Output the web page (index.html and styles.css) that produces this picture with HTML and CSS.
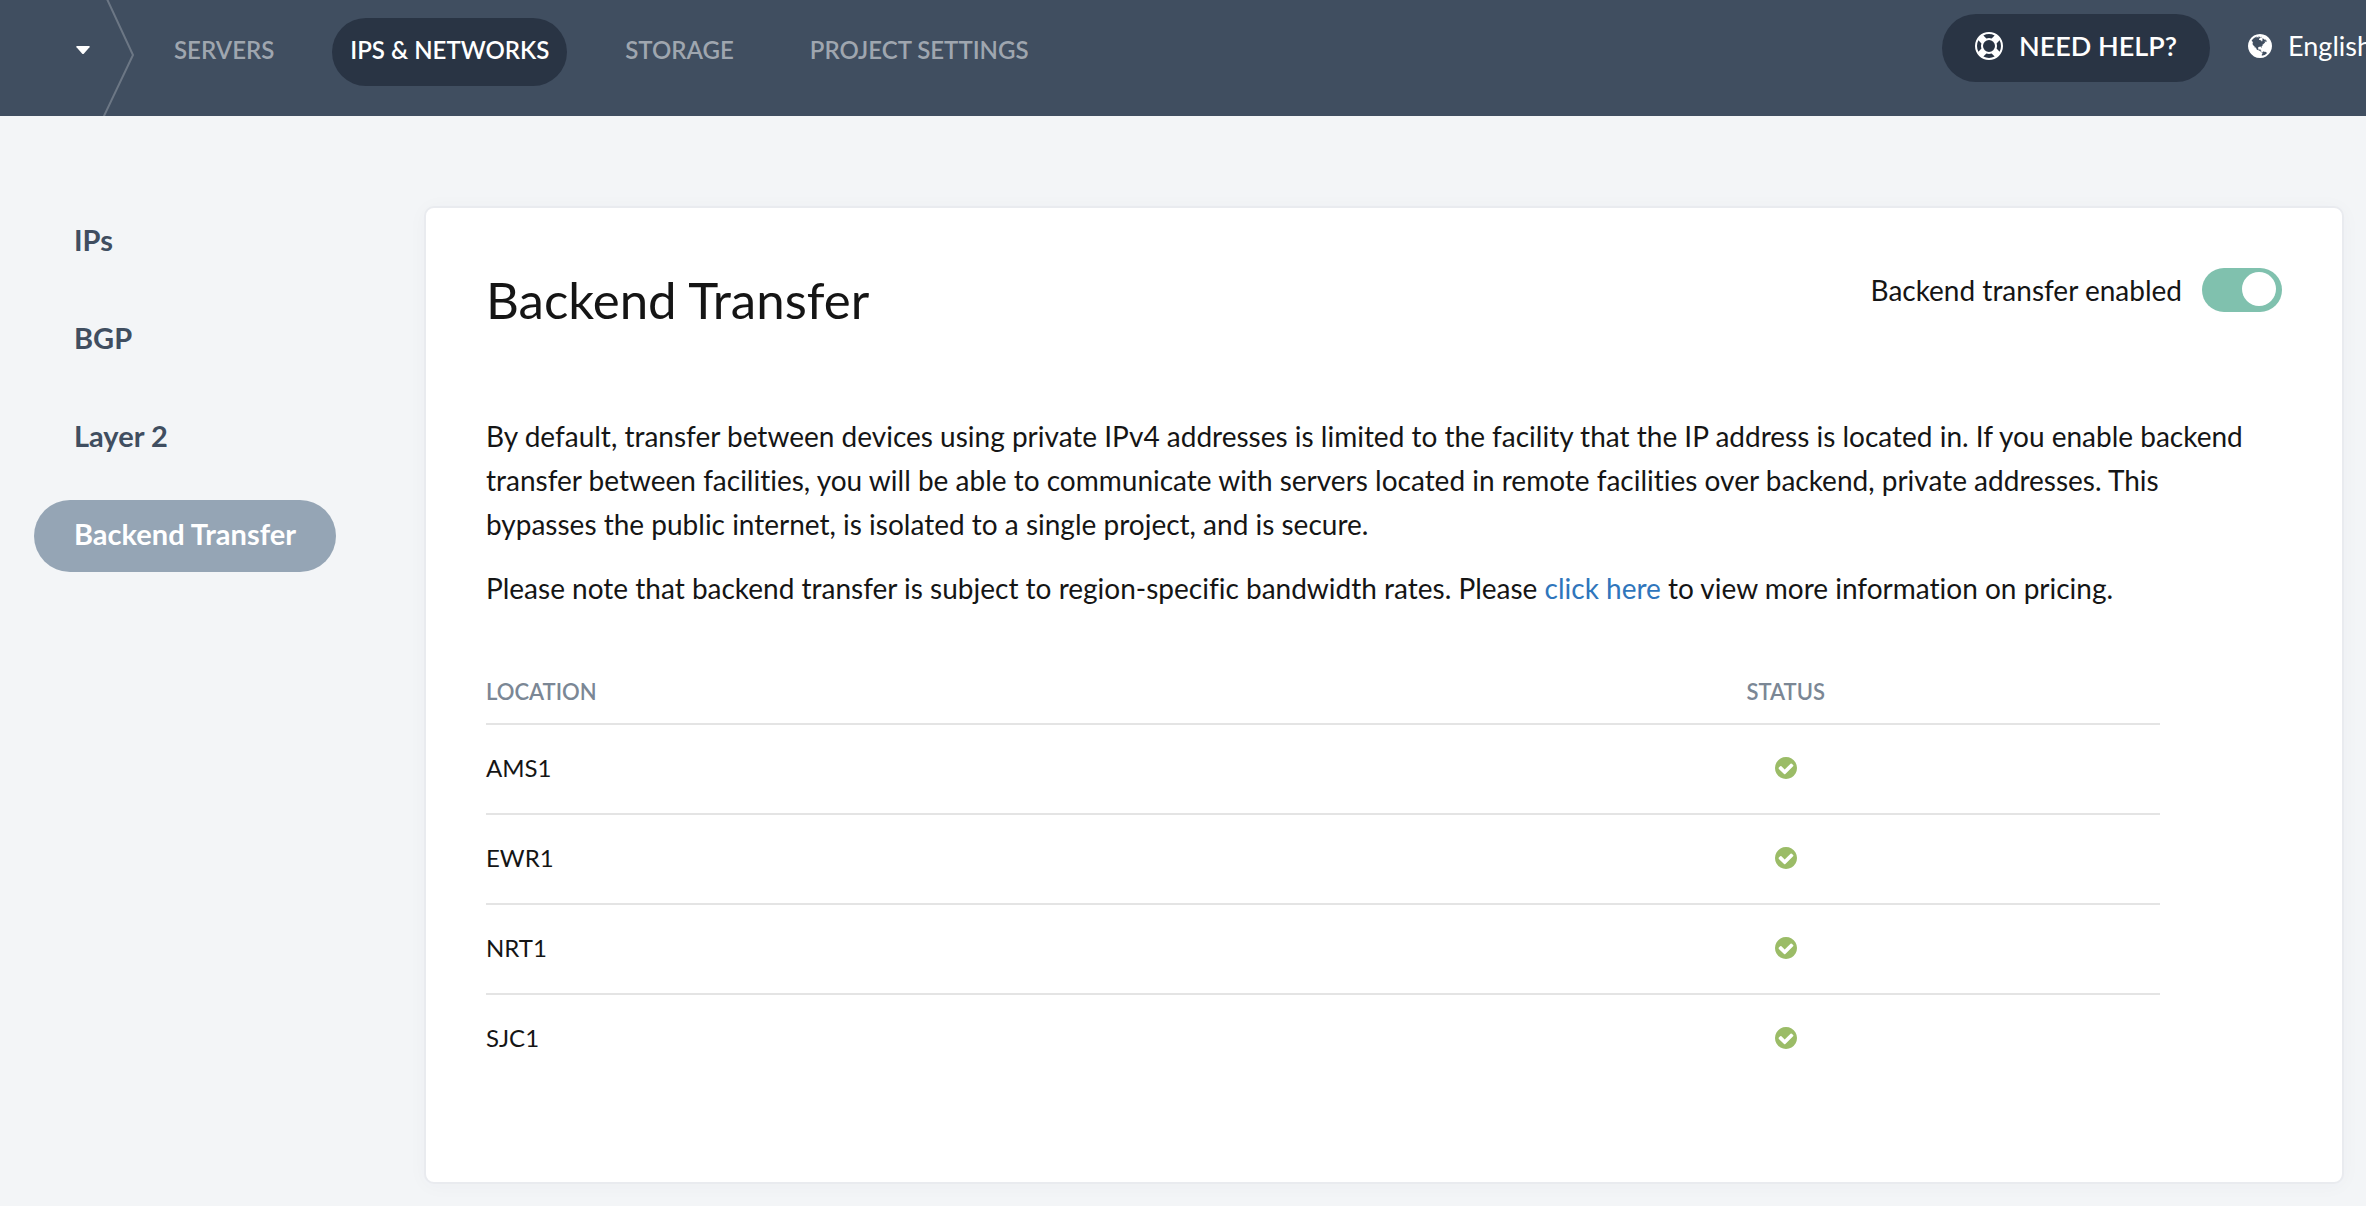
FILE: index.html
```html
<!DOCTYPE html>
<html lang="en">
<head>
<meta charset="utf-8">
<meta name="viewport" content="width=device-width, initial-scale=1">
<title>Backend Transfer</title>
<link rel="stylesheet" href="styles.css">
</head>
<body>
<svg class="sprite" aria-hidden="true">
  <symbol id="check" viewBox="128 128 1536 1536"><path d="M1412 734q0-28-18-46l-91-90q-19-19-45-19t-45 19l-408 407-226-226q-19-19-45-19t-45 19l-91 90q-18 18-18 46 0 27 18 45l362 362q19 19 45 19 27 0 46-19l543-543q18-18 18-45zm252 162q0 209-103 385.5t-279.5 279.5-385.5 103-385.5-103-279.5-279.5-103-385.5 103-385.5 279.5-279.5 385.5-103 385.5 103 279.5 279.5 103 385.5z"/></symbol>
</svg>
<header class="topbar">
  <button class="project-menu" type="button" aria-label="Switch project">
    <svg width="14" height="8" viewBox="0 0 14 8" aria-hidden="true"><path d="M1 0H13Q14.400 0 13.500 1.200L8 7.400Q7 8.400 6 7.400L.5 1.200Q-.4 0 1 0Z"/></svg>
  </button>
  <svg class="divider" width="32" height="116" viewBox="0 0 32 116" aria-hidden="true"><path d="M4 -1L30 55L0.500 117"/></svg>
  <nav class="mainnav" aria-label="Project">
    <a href="#">SERVERS</a>
    <a href="#" class="active" aria-current="page">IPS &amp; NETWORKS</a>
    <a href="#">STORAGE</a>
    <a href="#">PROJECT SETTINGS</a>
  </nav>
  <div class="tools">
    <button class="help" type="button">
      <svg width="28" height="28" viewBox="0 0 1792 1792" aria-hidden="true"><path d="M896 0q182 0 348 71t286 191 191 286 71 348-71 348-191 286-286 191-348 71-348-71-286-191-191-286-71-348 71-348 191-286 286-191 348-71zm0 128q-190 0-361 90l194 194q82-28 167-28t167 28l194-194q-171-90-361-90zm-678 1129l194-194q-28-82-28-167t28-167l-194-194q-90 171-90 361t90 361zm678 407q190 0 361-90l-194-194q-82 28-167 28t-167-28l-194 194q171 90 361 90zm0-384q159 0 271.5-112.5t112.5-271.5-112.5-271.5-271.5-112.5-271.5 112.5-112.5 271.5 112.5 271.5 271.5 112.5zm484-217l194 194q90-171 90-361t-90-361l-194 194q28 82 28 167t-28 167z"/></svg>
      NEED HELP?
    </button>
    <button class="language" type="button">
      <svg width="24" height="24" viewBox="128 128 1536 1536" aria-hidden="true"><path d="M896 128q209 0 385.5 103t279.5 279.5 103 385.5-103 385.5-279.5 279.5-385.5 103-385.5-103-279.5-279.5-103-385.5 103-385.5 279.5-279.5 385.5-103zm274 521q-2 1-9.5 9.5t-13.5 9.5q2 0 4.5-5t5-11 3.5-7q6-7 22-15 14-6 52-12 34-8 51 11-2-2 9.500-13t14.500-12q3-2 15-4.500t15-7.500l2-22q-12 1-17.500-7t-6.500-21q0 2-6 8 0-7-4.500-8t-11.500 1-9 1q-10-3-15-7.500t-8-16.500-4-15q-2-5-9.500-11t-9.500-10q-1-2-2.500-5.500t-3-6.500-4-5.500-5.500-2.500-7 5-7.500 10-4.500 5q-3-2-6-1.500t-4.500 1-4.500 3-5 3.500q-3 2-8.500 3t-8.500 2q15-5-1-11-10-4-16-3 9-4 7.500-12t-8.500-14h5q-1-4-8.500-8.500t-17.500-8.500-13-6q-8-5-34-9.500t-33-.5q-5 6-4.500 10.500t4 14 3.500 12.500q1 6-5.500 13t-6.500 12q0 7 14 15.500t10 21.500q-3 8-16 16t-16 12q-5 8-1.500 18.500t10.500 16.500q2 2 1.500 4t-3.500 4.500-5.500 4-6.500 3.500l-3 2q-11 5-20.500-6t-13.500-26q-7-25-16-30-23-8-29 1-5-13-41-26-25-9-58-4 6-1 0-15-7-15-19-12 3-6 4-17.500t1-13.500q3-13 12-23 1-1 7-8.500t9.500-13.500.5-6q35 4 50-11 5-5 11.500-17t10.500-17q9-6 14-5.500t14.500 5.500 14.500 5q14 1 15.500-11t-7.500-20q12 1 3-17-4-7-8-9-12-4-27 5-8 4 2 8-1-1-9.500 10.500t-16.500 17.500-16-5q-1-1-5.500-13.500t-9.500-13.500q-8 0-16 15 3-8-11-15t-24-8q19-12-8-27-7-4-20.500-5t-19.500 4q-5 7-5.500 11.500t5 8 10.500 5.500 11.500 4 8.500 3q14 10 8 14-2 1-8.500 3.500t-11.500 4.500-6 4q-3 4 0 14t-2 14q-5-5-9-17.500t-7-16.500q7 9-25 6l-10-1q-4 0-16 2t-20.500 1-13.500-8q-4-8 0-20 1-4 4-2-4-3-11-9.500t-10-8.500q-46 15-94 41 6 1 12-1 5-2 13-6.500t10-5.500q34-14 42-7l5-5q14 16 20 25-7-4-30-1-20 6-22 12 7 12 5 18-4-3-11.500-10t-14.500-11-15-5q-16 0-22 1-146 80-235 222 7 7 12 8 4 1 5 9t2.500 11 11.500-3q9 8 3 19 1-1 44 27 19 17 21 21 3 11-10 18-1-2-9-9t-9-4q-3 5 .5 18.500t10.500 12.500q-7 0-9.500 16t-2.500 35.500-1 23.500l2 1q-3 12 5.500 34.500t21.500 19.500q-13 3 20 43 6 8 8 9 3 2 12 7.500t15 10 10 10.500q4 5 10 22.500t14 23.500q-2 6 9.500 20t10.500 23q-1 0-2.500 1t-2.500 1q3 7 15.500 14t15.500 13q1 3 2 10t3 11 8 2q2-20-24-62-15-25-17-29-3-5-5.500-15.500t-4.500-14.500q2 0 6 1.500t8.500 3.500 7.500 4 2 3q-3 7 2 17.500t12 18.500 17 19 12 13q6 6 14 19.500t0 13.500q9 0 20 10t17 20q5 8 8 26t5 24q2 7 8.500 13.500t12.500 9.500l16 8 13 7q5 2 18.500 10.500t21.500 11.500q10 4 16 4t14.500-2.500 13.500-3.500q15-2 29 15t21 21q36 19 55 11-2 1 .5 7.500t8 15.500 9 14.500 5.500 8.500q5 6 18 15t18 15q6-4 7-9-3 8 7 20t18 10q14-3 14-32-31 15-49-18 0-1-2.500-5.500t-4-8.500-2.500-8.500 0-7.500 5-3q9 0 10-3.500t-2-12.500-4-13q-1-8-11-20t-12-15q-5 9-16 8t-16-9q0 1-1.500 5.500t-1.500 6.500q-13 0-15-1 1-3 2.500-17.500t3.500-22.500q1-4 5.500-12t7.500-14.500 4-12.500-4.500-9.500-17.500-2.500q-19 1-26 20-1 3-3 10.500t-5 11.500-9 7q-7 3-24 2t-24-5q-13-8-22.500-29t-9.500-37q0-10 2.500-26.500t3-25-5.500-24.500q3-2 9-9.500t10-10.500q2-1 4.500-1.500t4.500 0 4-1.500 3-6q-1-1-4-3-3-3-4-3 7 3 28.500-1.500t27.500 1.500q15 11 22-2 0-1-2.500-9.500t-.5-13.500q5 27 29 9 3 3 15.500 5t17.500 5q3 2 7 5.500t5.500 4.500 5-.5 8.500-6.500q10 14 12 24 11 40 19 44 7 3 11 2t4.500-9.500 0-14-1.500-12.500l-1-8v-18l-1-8q-15-3-18.500-12t1.500-18.500 15-18.500q1-1 8-3.500t15.500-6.500 12.500-8q21-19 15-35 7 0 11-9-1 0-5-3t-7.500-5-4.500-2q9-5 2-16 5-3 7.500-11t7.500-10q9 12 21 2 8-8 1-16 5-7 20.500-10.500t18.500-9.500q7 2 8-2t1-12 3-12q4-5 15-9t13-5l17-11q3-4 0-4 18 2 31-11 10-11-6-20 3-6-3-9.500t-15-5.500q3-1 11.500-.5t10.500-1.500q15-10-7-16-17-5-43 12zm-163 877q206-36 351-189-3-3-12.500-4.500t-12.500-3.500q-18-7-24-8 1-7-2.500-13t-8-9-12.500-8-11-7q-2-2-7-6t-7-5.500-7.500-4.500-8.500-2-10 1l-3 1q-3 1-5.500 2.500t-5.500 3-4 3 0 2.500q-21-17-36-22-5-1-11-5.500t-10.500-7-10-1.500-11.500 7q-5 5-6 15t-2 13q-7-5 0-17.500t2-18.500q-3-6-10.500-4.500t-12 4.500-11.500 8.500-9 6.500-8.500 5.500-8.500 7.500q-3 4-6 12t-5 11q-2-4-11.500-6.500t-9.500-5.500q2 10 4 35t5 38q7 31-12 48-27 25-29 40-4 22 12 26 0 7-8 20.500t-7 21.500q0 6 2 16z"/></svg>
      English
    </button>
  </div>
</header>
<div class="layout">
  <nav class="sidenav" aria-label="IPs and networks">
    <a href="#">IPs</a>
    <a href="#">BGP</a>
    <a href="#">Layer 2</a>
    <a href="#" class="active" aria-current="page">Backend Transfer</a>
  </nav>
  <main class="card">
    <div class="card-head">
      <h1>Backend Transfer</h1>
      <label class="switch">Backend transfer enabled <input type="checkbox" role="switch" checked></label>
    </div>
    <p>By default, transfer between devices using private IPv4 addresses is limited to the facility that the IP address is located in. If you enable backend transfer between facilities, you will be able to communicate with servers located in remote facilities over backend, private addresses. This bypasses the public internet, is isolated to a single project, and is secure.</p>
    <p>Please note that backend transfer is subject to region-specific bandwidth rates. Please <a href="#">click here</a> to view more information on pricing.</p>
    <table class="locations">
      <thead>
        <tr><th scope="col">LOCATION</th><th scope="col" class="status">STATUS</th></tr>
      </thead>
      <tbody>
        <tr><td>AMS1</td><td class="status"><svg role="img" aria-label="Enabled"><use href="#check"/></svg></td></tr>
        <tr><td>EWR1</td><td class="status"><svg role="img" aria-label="Enabled"><use href="#check"/></svg></td></tr>
        <tr><td>NRT1</td><td class="status"><svg role="img" aria-label="Enabled"><use href="#check"/></svg></td></tr>
        <tr><td>SJC1</td><td class="status"><svg role="img" aria-label="Enabled"><use href="#check"/></svg></td></tr>
      </tbody>
    </table>
  </main>
</div>
</body>
</html>
```
FILE: styles.css
```css
* {
  box-sizing: border-box;
}

body {
  margin: 0;
  background: #f3f5f7;
  color: #151515;
  font-family: Lato, "Open Sans", sans-serif;
  font-size: 28px;
  font-variant-ligatures: none;
  line-height: 44px;
}

a {
  color: #2f76bc;
  text-decoration: none;
}

button {
  border: 0;
  background: none;
  color: #fff;
  font: inherit;
  padding: 0;
  cursor: pointer;
}

svg {
  display: block;
  fill: currentColor;
}

.sprite {
  display: none;
}

/* Top bar */

.topbar {
  display: flex;
  align-items: flex-start;
  min-height: 116px;
  background: #404e60;
  overflow: hidden;
  white-space: nowrap;
}

.project-menu {
  padding: 46px 13px 46px 76px;
}

.divider {
  flex: none;
  fill: none;
  stroke: #6c7785;
  stroke-width: 2;
}

.mainnav {
  display: flex;
  gap: 40px;
  margin: 18px 0 0 21px;
  font-size: 24px;
  font-weight: 600;
}

.mainnav a {
  padding: 10px 18px 14px;
  border-radius: 34px;
  color: #9fa6af;
}

.mainnav .active {
  background: #293444;
  color: #fff;
}

.tools {
  display: flex;
  gap: 38px;
  margin: 14px -6px 0 auto;
  font-size: 27px;
}

.help,
.language {
  display: flex;
  align-items: center;
  gap: 16px;
  padding: 10px 0 14px;
}

.help {
  padding-left: 33px;
  padding-right: 33px;
  border-radius: 34px;
  background: #293444;
  font-weight: 600;
}

/* Page */

.layout {
  display: grid;
  grid-template-columns: 390px minmax(0, 1fr);
  padding: 90px 22px 20px 34px;
}

.sidenav {
  display: flex;
  flex-direction: column;
  align-items: flex-start;
  gap: 26px;
  font-size: 29px;
}

.sidenav a {
  padding: 12px 40px 16px;
  border-radius: 36px;
  color: #404e60;
  font-weight: 700;
}

.sidenav .active {
  background: #95a5b5;
  color: #fff;
}

.card {
  padding: 60px 60px 98px;
  border: 2px solid #e9ebef;
  border-radius: 10px;
  background: #fff;
  box-shadow: 0 2px 20px rgba(60, 70, 90, 0.03);
}

.card-head {
  display: flex;
  justify-content: space-between;
  align-items: flex-start;
  margin-bottom: 82px;
}

h1 {
  margin: 0;
  font-size: 51px;
  font-weight: 400;
  line-height: 64px;
}

.switch {
  display: flex;
  align-items: center;
  gap: 20px;
}

.switch input {
  display: flex;
  justify-content: flex-end;
  appearance: none;
  width: 80px;
  height: 44px;
  margin: 0;
  padding: 4px 6px;
  border-radius: 22px;
  background: #80c1ae;
}

.switch input::before {
  content: "";
  width: 34px;
  height: 34px;
  border-radius: 50%;
  background: #fff;
}

.switch input:not(:checked) {
  justify-content: flex-start;
  background: #c3cad2;
}

p {
  max-width: 99%;
  margin: 0 0 20px;
}

.locations {
  width: 93.2%;
  margin-top: 60px;
  border-collapse: collapse;
  font-size: 24px;
}

.locations th {
  padding: 0 0 9px;
  color: #7b8795;
  font-size: 22px;
  font-weight: 600;
  text-align: left;
}

.locations td {
  height: 90px;
  padding: 0 0 3px;
  border-top: 2px solid #e4e4e4;
}

.locations .status {
  width: 44.7%;
  text-align: center;
}

.locations .status svg {
  width: 22px;
  height: 22px;
  margin: 0 auto;
  color: #9bbc67;
}
```
